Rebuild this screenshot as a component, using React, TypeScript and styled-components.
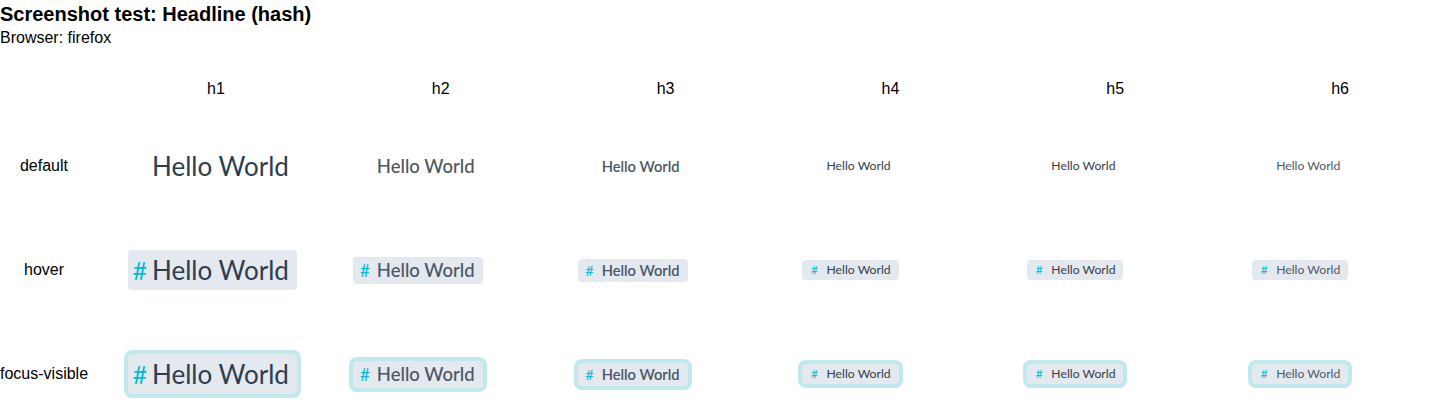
import React from "react";
import styled, { createGlobalStyle, css } from "styled-components";

const GlobalStyle = createGlobalStyle`
  html, body { margin: 0; padding: 0; background: #ffffff; }
  body { font-family: "Liberation Sans", Arial, sans-serif; color: #000000; }
`;

const Page = styled.div`
  display: flex;
  flex-direction: column;
`;

const Title = styled.div`
  font-size: 20px;
  font-weight: 700;
  line-height: 24px;
  padding-top: 2px;
`;

const Subtitle = styled.div`
  font-size: 16px;
  line-height: 18px;
  padding-top: 3px;
`;

const Grid = styled.div`
  display: grid;
  grid-template-columns: 88px repeat(6, minmax(0, 1fr));
  grid-template-rows: 34px repeat(3, 104px);
  align-items: center;
  margin-top: 33px;
`;

const ColHeader = styled.div`
  align-self: start;
  font-size: 16px;
  line-height: 18px;
  text-align: center;
  padding-left: 31px;
`;

const RowLabel = styled.div`
  font-size: 16px;
  line-height: 18px;
  text-align: center;
  white-space: nowrap;
`;

const Cell = styled.div`
  display: flex;
  align-items: center;
  padding-left: 40px;
`;

type Level = 1 | 2 | 3 | 4 | 5 | 6;
type State = "default" | "hover" | "focus";

interface LevelStyle {
  size: number;
  weight: number;
  color: string;
  height: number;
  hash: number;
}

const LEVELS: Record<Level, LevelStyle> = {
  1: { size: 26, weight: 400, color: "#2c3e50", height: 40, hash: 25 },
  2: { size: 18.5, weight: 500, color: "#4a5866", height: 27, hash: 17 },
  3: { size: 14.7, weight: 600, color: "#4a5866", height: 23, hash: 14 },
  4: { size: 12.2, weight: 400, color: "#34404c", height: 20, hash: 12 },
  5: { size: 12.2, weight: 400, color: "#34404c", height: 20, hash: 12 },
  6: { size: 12.2, weight: 400, color: "#4e5a66", height: 20, hash: 12 },
};

const Headline = styled.h1<{ $lv: LevelStyle; $state: State }>`
  margin: 0;
  display: inline-flex;
  align-items: center;
  height: ${(p) => p.$lv.height}px;
  line-height: ${(p) => p.$lv.height}px;
  padding: 0 8px 0 4px;
  border-radius: 4px;
  font-family: Lato, "Liberation Sans", sans-serif;
  font-size: ${(p) => p.$lv.size}px;
  font-weight: ${(p) => p.$lv.weight};
  color: ${(p) => p.$lv.color};
  white-space: nowrap;
  background: ${(p) => (p.$state === "default" ? "transparent" : "#e3e9ef")};
  ${(p) =>
    p.$state === "focus" &&
    css`
      box-shadow: 0 0 0 4px #bfe9ec;
    `}
`;

const Hash = styled.span<{ $visible: boolean; $size: number }>`
  flex: none;
  width: 16px;
  margin-right: 4px;
  text-align: center;
  font-size: ${(p) => p.$size}px;
  font-weight: 400;
  color: #00bcd4;
  visibility: ${(p) => (p.$visible ? "visible" : "hidden")};
`;

const levels: Level[] = [1, 2, 3, 4, 5, 6];
const states: { key: State; label: string }[] = [
  { key: "default", label: "default" },
  { key: "hover", label: "hover" },
  { key: "focus", label: "focus-visible" },
];

export default function App() {
  return (
    <Page>
      <GlobalStyle />
      <Title>Screenshot test: Headline (hash)</Title>
      <Subtitle>Browser: firefox</Subtitle>
      <Grid>
        <div />
        {levels.map((l) => (
          <ColHeader key={l}>h{l}</ColHeader>
        ))}
        {states.map((s) => (
          <React.Fragment key={s.key}>
            <RowLabel>{s.label}</RowLabel>
            {levels.map((l) => (
              <Cell key={l}>
                <Headline as={`h${l}` as "h1"} $lv={LEVELS[l]} $state={s.key}>
                  <Hash $visible={s.key !== "default"} $size={LEVELS[l].hash}>
                    #
                  </Hash>
                  Hello World
                </Headline>
              </Cell>
            ))}
          </React.Fragment>
        ))}
      </Grid>
    </Page>
  );
}
